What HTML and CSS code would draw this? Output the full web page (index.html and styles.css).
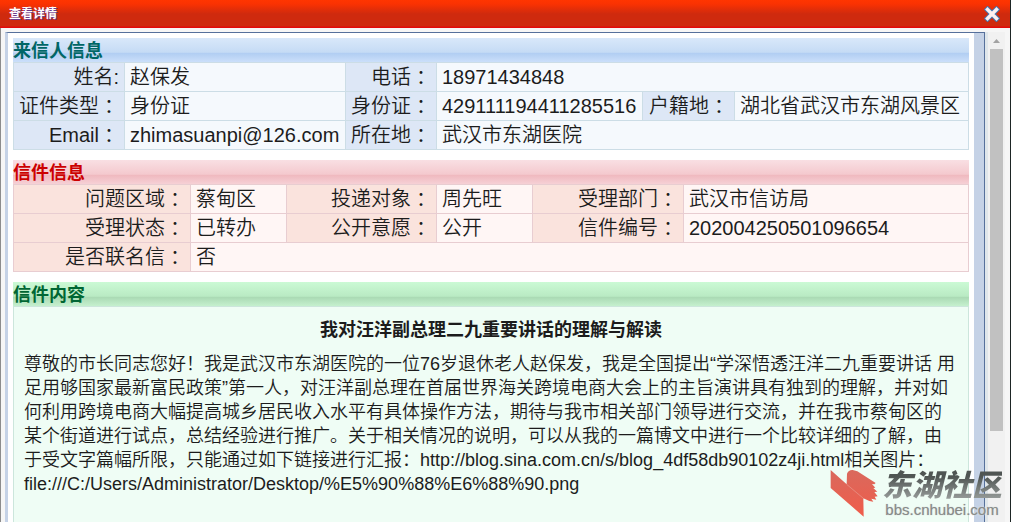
FILE: index.html
```html
<!DOCTYPE html>
<html lang="zh-CN">
<head>
  <meta charset="UTF-8">
  <meta name="viewport" content="width=device-width, initial-scale=1.0">
  <title>查看详情</title>
  <link rel="stylesheet" href="styles.css">
</head>
<body>
  <div class="dialog">
    <header class="titlebar">
      <h1>查看详情</h1>
      <button class="close" type="button" aria-label="关闭">
        <svg width="16" height="16" viewBox="0 0 16 16">
          <path d="M3.5 3.5L12.5 12.5M12.5 3.5L3.5 12.5" stroke="#3f78b5" stroke-width="5.4" stroke-linecap="square"/>
          <path d="M3.5 3.5L12.5 12.5M12.5 3.5L3.5 12.5" stroke="#fff0f0" stroke-width="3.4" stroke-linecap="square"/>
        </svg>
      </button>
    </header>

    <div class="viewport">
      <main class="page">
        <section class="block sender">
          <h2>来信人信息</h2>
          <table>
            <colgroup>
              <col class="s1"><col class="s2"><col class="s3"><col class="s4"><col class="s5"><col>
            </colgroup>
            <tr>
              <th scope="row">姓名:</th>
              <td>赵保发</td>
              <th scope="row">电话<span class="mark">：</span></th>
              <td colspan="3">18971434848</td>
            </tr>
            <tr>
              <th scope="row">证件类型<span class="mark">：</span></th>
              <td>身份证</td>
              <th scope="row">身份证<span class="mark">：</span></th>
              <td>429111194411285516</td>
              <th scope="row">户籍地<span class="mark">：</span></th>
              <td>湖北省武汉市东湖风景区</td>
            </tr>
            <tr>
              <th scope="row">Email<span class="mark">：</span></th>
              <td>zhimasuanpi@126.com</td>
              <th scope="row">所在地<span class="mark">：</span></th>
              <td colspan="3">武汉市东湖医院</td>
            </tr>
          </table>
        </section>

        <section class="block letter">
          <h2>信件信息</h2>
          <table>
            <colgroup>
              <col class="l1"><col class="l2"><col class="l3"><col class="l2"><col class="l4"><col>
            </colgroup>
            <tr>
              <th scope="row">问题区域<span class="mark">：</span></th>
              <td>蔡甸区</td>
              <th scope="row">投递对象<span class="mark">：</span></th>
              <td>周先旺</td>
              <th scope="row">受理部门<span class="mark">：</span></th>
              <td>武汉市信访局</td>
            </tr>
            <tr>
              <th scope="row">受理状态<span class="mark">：</span></th>
              <td>已转办</td>
              <th scope="row">公开意愿<span class="mark">：</span></th>
              <td>公开</td>
              <th scope="row">信件编号<span class="mark">：</span></th>
              <td>202004250501096654</td>
            </tr>
            <tr>
              <th scope="row">是否联名信<span class="mark">：</span></th>
              <td colspan="5">否</td>
            </tr>
          </table>
        </section>

        <section class="block content">
          <h2>信件内容</h2>
          <article>
            <h3>我对汪洋副总理二九重要讲话的理解与解读</h3>
            <p>尊敬的市长同志您好！我是武汉市东湖医院的一位76岁退休老人赵保发，我是全国提出“学深悟透汪洋二九重要讲话 用足用够国家最新富民政策”第一人，对汪洋副总理在首届世界海关跨境电商大会上的主旨演讲具有独到的理解，并对如何利用跨境电商大幅提高城乡居民收入水平有具体操作方法，期待与我市相关部门领导进行交流，并在我市蔡甸区的某个街道进行试点，总结经验进行推广。关于相关情况的说明，可以从我的一篇博文中进行一个比较详细的了解，由于受文字篇幅所限，只能通过如下链接进行汇报：http://blog.sina.com.cn/s/blog_4df58db90102z4ji.html相关图片：file:///C:/Users/Administrator/Desktop/%E5%90%88%E6%88%90.png</p>
          </article>
        </section>
      </main>

      <div class="scrollbar">
        <svg class="arrow" width="7" height="4" viewBox="0 0 7 4"><path d="M0 4L3.5 0L7 4z" fill="#a3a3a3"/></svg>
        <div class="thumb"></div>
      </div>
    </div>
  </div>

  <div class="watermark">
    <svg width="48" height="49" viewBox="0 0 144 147">
      <defs>
        <linearGradient id="red" x1="0" y1="0" x2="0" y2="1">
          <stop offset="0" stop-color="#d9695d"/>
          <stop offset="1" stop-color="#f05c4a"/>
        </linearGradient>
      </defs>
      <path d="M2 3L50 46L51 14Q56 2 68 3L82 7L137 42L133 46L126 45L136 56L130 57L142 68L133 69L143 82L134 83L139 92L124 89L130 98L118 96L100 88L101 143L2 57z" fill="url(#red)"/>
      <path d="M50 46L100 88" stroke="#e99c90" stroke-width="2"/>
    </svg>
    <div class="brand">
      <strong>东湖社区</strong>
      <span>bbs.cnhubei.com</span>
    </div>
  </div>
</body>
</html>
```

FILE: styles.css
```css
* {
  box-sizing: border-box;
}
body {
  margin: 0;
  height: 100vh;
  overflow: hidden;
  font-family: "Liberation Sans", Arial, "Noto Sans CJK SC", sans-serif;
  font-weight: 350;
  color: #1c1c1c;
  background: #f6f6f6;
}
h1, h2, h3, p {
  margin: 0;
}
.dialog {
  display: flex;
  flex-direction: column;
  height: 100vh;
  border-right: 1px solid #1d2524;
}

/* title bar */
.titlebar {
  flex: none;
  display: flex;
  align-items: center;
  justify-content: space-between;
  height: 28px;
  padding: 0 10px 0 9px;
  background: linear-gradient(#ff3500 0, #fa3202 4px, #cf2a0e 14px, #cf2a0e 26px, #e30a0a 27px);
}
.titlebar h1 {
  font-size: 12px;
  line-height: 28px;
  font-weight: bold;
  color: #fff;
  text-shadow: 1px 1px 0 #6b3a8a;
}
.close {
  display: flex;
  padding: 0;
  border: none;
  background: none;
  cursor: pointer;
}

/* scrolled area */
.viewport {
  flex: 1;
  display: flex;
  min-height: 0;
  padding: 4px 5px 0 4px;
  border-left: 1px solid #8c8c8c;
}
.page {
  flex: 1;
  min-width: 0;
  display: flex;
  flex-direction: column;
  gap: 10px;
  padding: 5px 15px 0 5px;
  background: #fff;
  border-top: 1px solid #56709b;
  border-left: 3px solid #c5d2e6;
  border-right: 1px solid #56709b;
  box-shadow: inset -10px 0 #c5d2e6;
}
.scrollbar {
  flex: none;
  display: flex;
  flex-direction: column;
  align-items: center;
  width: 20px;
  padding: 7px 2px 0 2px;
  background: #f1f1f1;
  border-left: 3px solid #dfe6ea;
}
.arrow {
  flex: none;
}
.thumb {
  width: 13px;
  height: 79%;
  margin-top: 6px;
  background: #c1c1c1;
}

/* blocks */
.block h2 {
  height: 24px;
  font-size: 18px;
  line-height: 26px;
  font-weight: bold;
}
.sender h2 {
  color: #006666;
  background: linear-gradient(#d9e8fa, #c5dbf5 60%, #b0cdf2 62%, #cbdffa);
}
.letter h2 {
  color: #cc0000;
  background: linear-gradient(#f9dfe3, #f4c9ce 60%, #efb8be 62%, #f6d0d5);
}
.content h2 {
  color: #006633;
  background: linear-gradient(#cbfad5, #b9eac3 60%, #a9d9b3 62%, #c5f0ce);
}
table {
  width: 100%;
  table-layout: fixed;
  border-collapse: collapse;
}
th, td {
  height: 29px;
  padding: 0 5px;
  font-size: 20px;
  line-height: 28px;
  font-weight: 350;
  white-space: nowrap;
  border: 1px solid #ccdde6;
}
th {
  text-align: right;
}
td {
  text-align: left;
}
/* full-width colon centred in its em box */
.mark {
  padding: 0 0.25em;
  font-feature-settings: "halt";
}
.sender th {
  background: #dde7f6;
}
.sender td {
  background: #f5f9fd;
}
.letter th, .letter td {
  border-color: #e8cdd1;
}
.letter th {
  background: #fae3dd;
}
.letter td {
  background: #fff6f5;
}
.s1 { width: 111px; }
.s2 { width: 221px; }
.s3 { width: 91px; }
.s4 { width: 206px; }
.s5 { width: 92px; }
.l1 { width: 177px; }
.l2 { width: 96px; }
.l3 { width: 150px; }
.l4 { width: 151px; }

/* letter text */
.content {
  flex: 1;
  display: flex;
  flex-direction: column;
}
.content article {
  flex: 1;
  padding: 11px 10px;
  background: #effdf5;
  border: 1px solid #cce6dc;
  border-bottom: none;
}
.content h3 {
  margin-bottom: 10px;
  font-size: 18px;
  line-height: 24px;
  font-weight: bold;
  text-align: center;
}
.content p {
  font-size: 18px;
  line-height: 24px;
}

/* site mark over the page */
.watermark {
  position: absolute;
  right: 9px;
  bottom: 4px;
  display: flex;
  align-items: center;
  gap: 4px;
}
.brand {
  display: flex;
  flex-direction: column;
  align-items: center;
}
.brand strong {
  font-size: 30px;
  line-height: 32px;
  font-weight: 900;
  font-style: italic;
  color: transparent;
  background: linear-gradient(#4f5553 20%, #969b99 90%);
  -webkit-background-clip: text;
  background-clip: text;
}
.brand span {
  font-size: 15px;
  line-height: 16px;
  font-weight: normal;
  color: #868a88;
  text-shadow: 0 0 2px #fff, 0 0 1px #868a88;
}
```
